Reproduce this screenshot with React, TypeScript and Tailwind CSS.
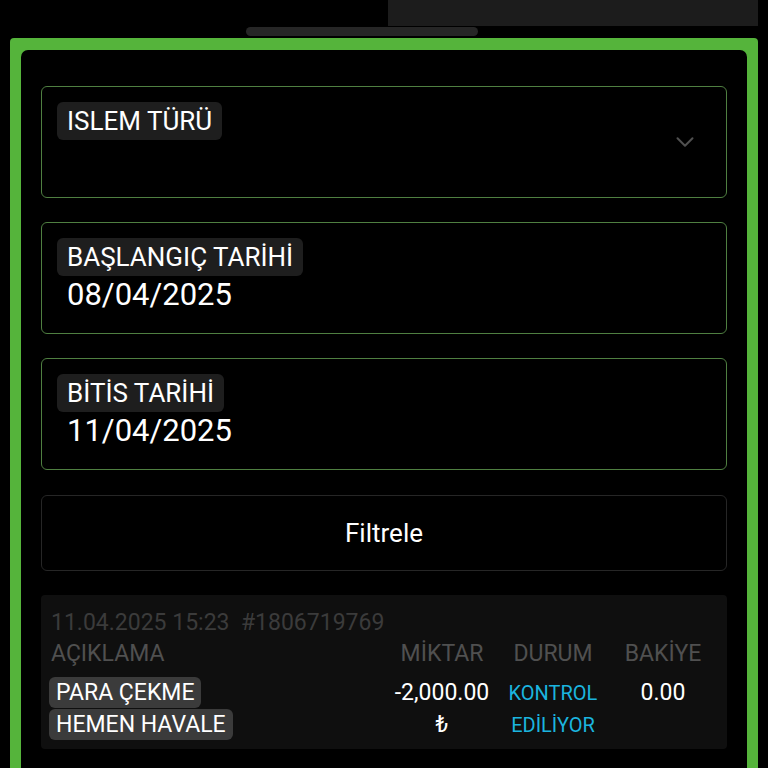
import { ChevronDown } from "lucide-react";

const fields = [
  { label: "BAŞLANGIÇ TARİHİ", value: "08/04/2025" },
  { label: "BİTİS TARİHİ", value: "11/04/2025" },
];

export default function App() {
  return (
    <div className="min-h-screen bg-black font-['Roboto',sans-serif] text-white">
      <div className="flex h-[26px] justify-end pr-[10px]">
        <div className="w-[370px] bg-[#1c1c1c]" />
      </div>
      <div className="ml-[246px] mt-[1px] h-[9px] w-[232px] rounded-full bg-[#262626]" />

      <div className="mx-[10px] mt-[2px] rounded-t-[4px] bg-[#55b43b] px-[11px] pt-[12px]">
        <div className="rounded-t-[7px] bg-black px-[20px] pb-[40px] pt-[36px]">
          <div className="relative h-[112px] rounded-[6px] border border-[#4f7f41] pl-[15px] pt-[15px]">
            <span className="inline-block h-[38px] rounded-[6px] bg-[#1e1e1e] px-[10px] text-[26px] leading-[38px]">
              ISLEM TÜRÜ
            </span>
            <ChevronDown
              className="absolute right-[26px] top-1/2 -translate-y-1/2 text-[#505050]"
              size={30}
              strokeWidth={1.6}
            />
          </div>

          {fields.map((f) => (
            <div
              key={f.label}
              className="mt-[24px] h-[112px] rounded-[6px] border border-[#4f7f41] pl-[15px] pt-[15px]"
            >
              <span className="inline-block h-[38px] rounded-[6px] bg-[#1e1e1e] px-[10px] text-[26px] leading-[38px]">
                {f.label}
              </span>
              <p className="mt-[2px] pl-[10px] text-[31px] leading-[34px]">{f.value}</p>
            </div>
          ))}

          <button className="mt-[25px] flex h-[76px] w-full items-center justify-center rounded-[6px] border border-[#262626] text-[26px]">
            Filtrele
          </button>

          <div className="mt-[24px] h-[154px] rounded-[4px] bg-[#0f0f0f] pl-[10px] pt-[15px]">
            <p className="text-[23px] leading-[26px] text-[#3b3b3b]">11.04.2025 15:23&nbsp;&nbsp;#1806719769</p>
            <div className="mt-[5px] grid grid-cols-[1fr_102px_110px_100px] gap-x-[5px] pr-[14px] text-[23px] leading-[26px] text-[#505050]">
              <span>AÇIKLAMA</span>
              <span className="text-center">MİKTAR</span>
              <span className="text-center">DURUM</span>
              <span className="text-center">BAKİYE</span>
            </div>
            <div className="mt-[10px] grid grid-cols-[1fr_102px_110px_100px] gap-x-[5px] pr-[14px]">
              <div className="-ml-[2px] flex flex-col items-start gap-[1px]">
                <span className="h-[31px] rounded-[6px] bg-[#3b3b3b] px-[7px] text-[23px] leading-[31px]">PARA ÇEKME</span>
                <span className="h-[31px] rounded-[6px] bg-[#3b3b3b] px-[7px] text-[23px] leading-[31px]">HEMEN HAVALE</span>
              </div>
              <div className="text-center text-[23px] leading-[32px]">
                <p>-2,000.00</p>
                <p>₺</p>
              </div>
              <div className="text-center text-[20px] leading-[32px] text-[#1bb4df]">
                <p>KONTROL</p>
                <p>EDİLİYOR</p>
              </div>
              <div className="text-center text-[23px] leading-[32px]">
                <p>0.00</p>
              </div>
            </div>
          </div>
        </div>
      </div>
    </div>
  );
}
